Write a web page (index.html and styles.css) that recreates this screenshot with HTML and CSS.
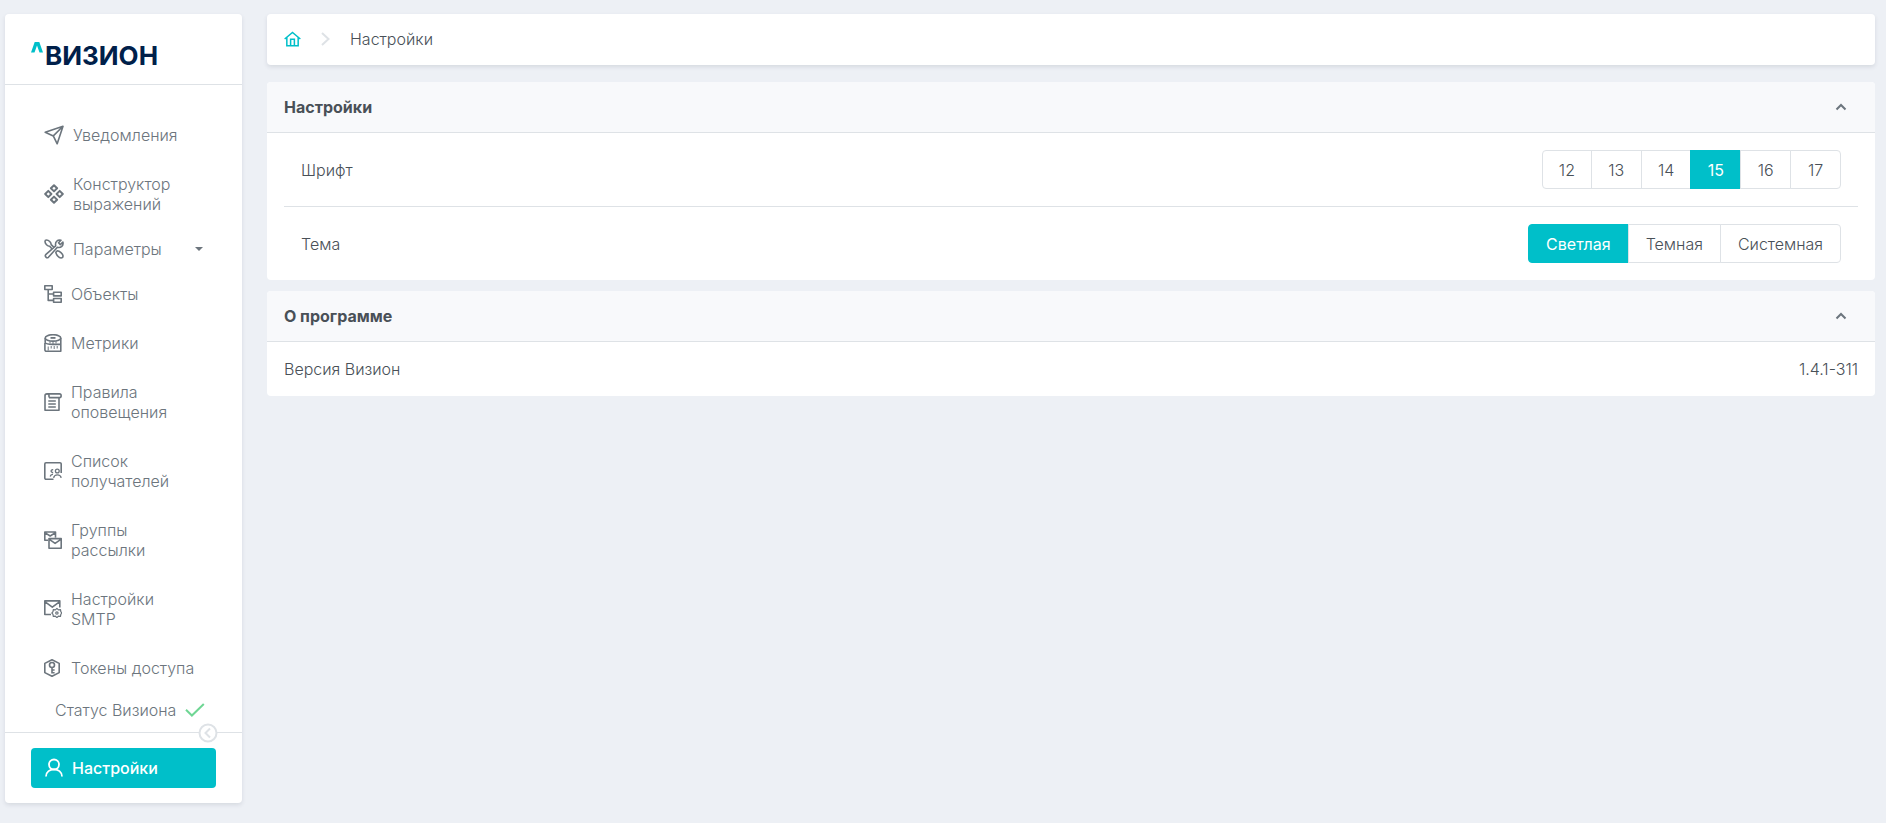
FILE: index.html
```html
<!DOCTYPE html>
<html lang="ru">
<head>
<meta charset="utf-8">
<title>Настройки</title>
<link rel="stylesheet" href="styles.css">
</head>
<body>
<div class="layout">
  <aside class="sidebar">
    <div class="logo">
      <svg class="logo-mark" width="12" height="11" viewBox="0 0 12 11"><path d="M0 10.500 3.700 0h4.600L12 10.500H8.500L6 3.600 3.500 10.500Z" fill="#00bfc9"/></svg>
      <span class="logo-text">ВИЗИОН</span>
    </div>
    <nav class="menu">
      <a class="menu-item" href="#">
        <svg class="icon icon-lg" viewBox="0 0 20 20"><path d="M1.200 7.300 19 1.200 13.200 18.800 9.300 10.900ZM9.300 10.900 19 1.200"/></svg>
        <span>Уведомления</span>
      </a>
      <a class="menu-item" href="#">
        <svg class="icon icon-lg" viewBox="0 0 20 20"><path d="M10 1.200 13.100 4.300 10 7.400 6.900 4.300ZM10 12.600l3.100 3.100L10 18.800 6.900 15.700ZM4.300 6.900 7.400 10 4.300 13.100 1.200 10ZM15.700 6.900 18.800 10l-3.100 3.100L12.600 10Z" stroke-width="2"/></svg>
        <span>Конструктор<br>выражений</span>
      </a>
      <a class="menu-item menu-parent" href="#">
        <svg class="icon icon-lg" viewBox="0 0 20 20"><path d="M8.300 10.200 5.700 7.200C3.500 7.300 1 4.800 1 2.500 1 1.500 1.600 1 2.500 1 4.800 1 7.200 3.500 7.200 5.700L10 8.300M11.800 13.300 13.300 11.800C15.500 12 19 14.800 19 17 19 18.300 18.300 19 17 19 14.800 19 12 15.500 11.800 13.300ZM1.700 15.700 11.700 6.800C10.800 3 13.500.4 17 1.200L14.500 3.700 16.300 5.600 18.900 3.100C19.700 6.600 17 9.200 13.400 8.300L4.400 18.300A1.900 1.900 0 0 1 1.700 15.700Z"/></svg>
        <span>Параметры</span>
        <svg class="caret" width="8" height="4" viewBox="0 0 8 4"><path d="M0 0h8L4 4Z" fill="#6c757d"/></svg>
      </a>
      <a class="menu-item" href="#">
        <svg class="icon" viewBox="0 0 18 18"><path d="M.8.8h7.400v3.700H.8ZM9.600 7.200h7.600v3.700H9.600ZM9.600 13.500h7.600v3.700H9.600ZM4.200 4.500v10.900h5.400M4.200 9h5.400"/></svg>
        <span>Объекты</span>
      </a>
      <a class="menu-item" href="#">
        <svg class="icon" viewBox="0 0 18 18"><ellipse cx="9" cy="3.900" rx="7.800" ry="3.200"/><path d="M6.500 3.900h5" stroke-width="1.800"/><path d="M1.200 4v4.500c.6 1.200 3.800 1.900 7.300 1.900h8.300v6.800H2.500c-1 0-1.600-.5-1.600-1.500V9M16.800 4v6.400"/><path d="M6 7.500v2M9 7.800v2.200M12 7.500v2M4.200 12.500v4M7.200 12v2.500M10.200 12v3M13.200 12v2.500" stroke-width="1"/></svg>
        <span>Метрики</span>
      </a>
      <a class="menu-item" href="#">
        <svg class="icon" viewBox="0 0 18 18"><path d="M5 4.600V2.500C5 .3 1 .3 1 2.800v14.400h14V4.600M3 .9h12.500c2.200 0 2.200 3.700 0 3.700H5M4.300 8h7.500M4.300 11h7.500M4.300 14h7.500"/></svg>
        <span>Правила<br>оповещения</span>
      </a>
      <a class="menu-item" href="#">
        <svg class="icon" viewBox="0 0 18 18"><path d="M9.500 17.200H2a1.200 1.200 0 0 1-1.200-1.200V2A1.200 1.200 0 0 1 2 .8h14A1.200 1.200 0 0 1 17.200 2v9"/><g stroke-width="1.300"><circle cx="13.300" cy="9" r="1.900"/><path d="M9.600 15.800c.8-4 6.800-4 7.600 0M9.200 7.800c-2.800-.6-2.800 3 0 2.700M6.200 14.500c.3-1.500 1.300-2.200 2.800-2.100"/></g></svg>
        <span>Список<br>получателей</span>
      </a>
      <a class="menu-item" href="#">
        <svg class="icon" viewBox="0 0 18 18"><path d="M4 9.200H.8V1h10.700v5.500M.8 1.600 6.200 5l5.300-3.400M5 7.600h12.200v9.600H5ZM5 8.200l6.100 4.200 6.100-4.200"/></svg>
        <span>Группы<br>рассылки</span>
      </a>
      <a class="menu-item" href="#">
        <svg class="icon" viewBox="0 0 18 18"><path d="M7 14.500H.8V.9h15v6.600M.8 1.600l7.500 5.600 7.500-5.600"/><path d="m12.900 8.300 1.500 1.500 2.100-.1.300 2 1.100 1.300-1.100 1.300-.3 2-2.100-.1-1.500 1.500-1.500-1.500-2.100.1-.3-2L7.900 13l1.100-1.300.3-2 2.100.1Z" stroke-width="1.200"/><circle cx="12.900" cy="13" r="1.200" stroke-width="1.200"/></svg>
        <span>Настройки<br>SMTP</span>
      </a>
      <a class="menu-item" href="#">
        <svg class="icon" viewBox="0 0 18 18"><path d="M8 .8 15.200 4.400v9.200L8 17.200.8 13.600V4.400Z"/><circle cx="8" cy="6" r="2.500"/><path d="M8 8.500v6M8 11h2.600M8 13.800h2.600"/></svg>
        <span>Токены доступа</span>
      </a>
      <div class="status">
        <span>Статус Визиона</span>
        <svg width="20" height="14" viewBox="0 0 20 14"><path d="M1 6.800 6.900 12.500 18.800 1" fill="none" stroke="#6fd694" stroke-width="2"/></svg>
      </div>
    </nav>
    <div class="sidebar-footer">
      <button class="collapse" type="button" aria-label="Свернуть меню">
        <svg width="20" height="20" viewBox="0 0 20 20"><circle cx="10" cy="10" r="8.500" fill="#fff" stroke="#dee2e6" stroke-width="2"/><path d="M12 5.500 7.500 10l4.500 4.500" fill="none" stroke="#dee2e6" stroke-width="2"/></svg>
      </button>
      <button class="profile" type="button">
        <svg width="20" height="20" viewBox="0 0 20 20"><circle cx="10" cy="6.500" r="5"/><path d="M2 18.500C2 9 18 9 18 18.500"/></svg>
        <span>Настройки</span>
      </button>
    </div>
  </aside>

  <main class="content">
    <nav class="breadcrumbs">
      <a class="home" href="#" aria-label="Главная">
        <svg width="17" height="16" viewBox="0 0 18 16"><path d="M.7 8 9 1l8.300 7M3 6.500v8.700h12V6.500M7 15V8.200h4V15"/></svg>
      </a>
      <svg class="separator" width="9" height="14" viewBox="0 0 9 14"><path d="m1 1 6.500 6L1 13"/></svg>
      <span>Настройки</span>
    </nav>

    <div class="cards">
      <section class="card">
        <header class="card-header">
          <h2>Настройки</h2>
          <button class="toggle" type="button" aria-label="Свернуть раздел «Настройки»">
            <svg width="12" height="8" viewBox="0 0 12 8"><path d="M1.500 6.500 6 2l4.500 4.500"/></svg>
          </button>
        </header>
        <div class="card-body">
          <div class="setting">
            <span id="font-label">Шрифт</span>
            <div class="button-group sizes" role="group" aria-labelledby="font-label">
              <button type="button">12</button>
              <button type="button">13</button>
              <button type="button">14</button>
              <button type="button" class="active" aria-pressed="true">15</button>
              <button type="button">16</button>
              <button type="button">17</button>
            </div>
          </div>
          <div class="setting">
            <span id="theme-label">Тема</span>
            <div class="button-group" role="group" aria-labelledby="theme-label">
              <button type="button" class="active" aria-pressed="true">Светлая</button>
              <button type="button">Темная</button>
              <button type="button">Системная</button>
            </div>
          </div>
        </div>
      </section>

      <section class="card">
        <header class="card-header">
          <h2>О программе</h2>
          <button class="toggle" type="button" aria-label="Свернуть раздел «О программе»">
            <svg width="12" height="8" viewBox="0 0 12 8"><path d="M1.500 6.500 6 2l4.500 4.500"/></svg>
          </button>
        </header>
        <div class="about-row">
          <span>Версия Визион</span>
          <span>1.4.1-311</span>
        </div>
      </section>
    </div>
  </main>
</div>
</body>
</html>
```
FILE: styles.css
```css
* {
  box-sizing: border-box;
}

body {
  margin: 0;
  background: #edf0f5;
  color: #495057;
  font-family: Inter, "Liberation Sans", sans-serif;
  font-size: 16px;
  font-weight: 300;
  line-height: 20px;
}

button {
  font: inherit;
  cursor: pointer;
}

svg {
  flex-shrink: 0;
}

.layout {
  display: flex;
  gap: 25px;
  min-height: 100vh;
  padding: 14px 11px 20px 5px;
}

/* Sidebar */

.sidebar {
  display: flex;
  flex-direction: column;
  flex: 0 0 237px;
  background: #fff;
  border-radius: 4px;
  box-shadow: 0 2px 4px rgba(50, 60, 80, 0.12);
}

.logo {
  display: flex;
  align-items: flex-start;
  gap: 2px;
  height: 71px;
  padding: 28px 26px 0;
  border-bottom: 1px solid #dee2e6;
}

.logo-text {
  color: #00204a;
  font-size: 26px;
  font-weight: 700;
  line-height: 28px;
}

.menu {
  flex: 1;
  padding-top: 25px;
}

.menu-item {
  display: flex;
  align-items: center;
  gap: 9px;
  padding: 15px 39px 14px;
  color: #6c757d;
  text-decoration: none;
  white-space: nowrap;
}

.menu-parent {
  padding-top: 11px;
  padding-bottom: 10px;
}

.icon {
  width: 18px;
  height: 18px;
  fill: none;
  stroke: #6c757d;
  stroke-width: 1.600;
  stroke-linejoin: round;
}

.icon-lg {
  width: 20px;
  height: 20px;
}

.caret {
  margin-left: auto;
}

.status {
  display: flex;
  align-items: center;
  gap: 9px;
  padding: 8px 0 6px 50px;
  color: #6c757d;
  white-space: nowrap;
}

.sidebar-footer {
  position: relative;
  padding: 15px 26px;
  border-top: 1px solid #dee2e6;
}

.collapse {
  position: absolute;
  top: -10px;
  right: 24px;
  display: flex;
  padding: 0;
  border: 0;
  background: none;
}

.profile {
  display: flex;
  align-items: center;
  gap: 8px;
  width: 100%;
  height: 40px;
  padding: 0 13px;
  border: 0;
  border-radius: 4px;
  background: #00bfc9;
  color: #fff;
  font-weight: 500;
}

.profile svg {
  fill: none;
  stroke: #fff;
  stroke-width: 1.800;
}

/* Content */

.content {
  flex: 1;
  min-width: 0;
}

.breadcrumbs {
  display: flex;
  align-items: center;
  padding: 15px 17px 16px;
  background: #fff;
  border-radius: 4px;
  box-shadow: 0 2px 4px rgba(50, 60, 80, 0.12);
}

.home {
  display: flex;
}

.home svg {
  fill: none;
  stroke: #00bfc9;
  stroke-width: 1.600;
}

.separator {
  margin: 0 20px;
  fill: none;
  stroke: #dee2e6;
  stroke-width: 2;
}

.cards {
  display: flex;
  flex-direction: column;
  gap: 11px;
  margin-top: 17px;
}

.card {
  overflow: hidden;
  background: #fff;
  border-radius: 4px;
}

.card-header {
  display: flex;
  align-items: center;
  justify-content: space-between;
  padding: 15px 28px 15px 17px;
  background: #f8f9fb;
  border-bottom: 1px solid #dee2e6;
}

.card-header h2 {
  margin: 0;
  font-size: 16px;
  font-weight: 700;
}

.toggle {
  display: flex;
  padding: 0;
  border: 0;
  background: none;
}

.toggle svg {
  fill: none;
  stroke: #6c757d;
  stroke-width: 2;
}

.card-body {
  padding: 0 17px;
}

.setting {
  display: flex;
  align-items: center;
  justify-content: space-between;
  padding: 17px;
}

.setting + .setting {
  border-top: 1px solid #dee2e6;
}

.button-group {
  display: flex;
}

.button-group button {
  height: 39px;
  padding: 0 17px;
  border: 1px solid #dee2e6;
  background: #fff;
  color: #495057;
}

.button-group button + button {
  margin-left: -1px;
}

.button-group button:first-child {
  border-radius: 4px 0 0 4px;
}

.button-group button:last-child {
  border-radius: 0 4px 4px 0;
}

.button-group .active {
  border-color: #00bfc9;
  background: #00bfc9;
  color: #fff;
  font-weight: 400;
}

.sizes {
  display: grid;
  grid-template-columns: repeat(6, 1fr);
  width: 299px;
}

.sizes button {
  padding: 0;
}

.about-row {
  display: flex;
  justify-content: space-between;
  padding: 17px;
}
```
